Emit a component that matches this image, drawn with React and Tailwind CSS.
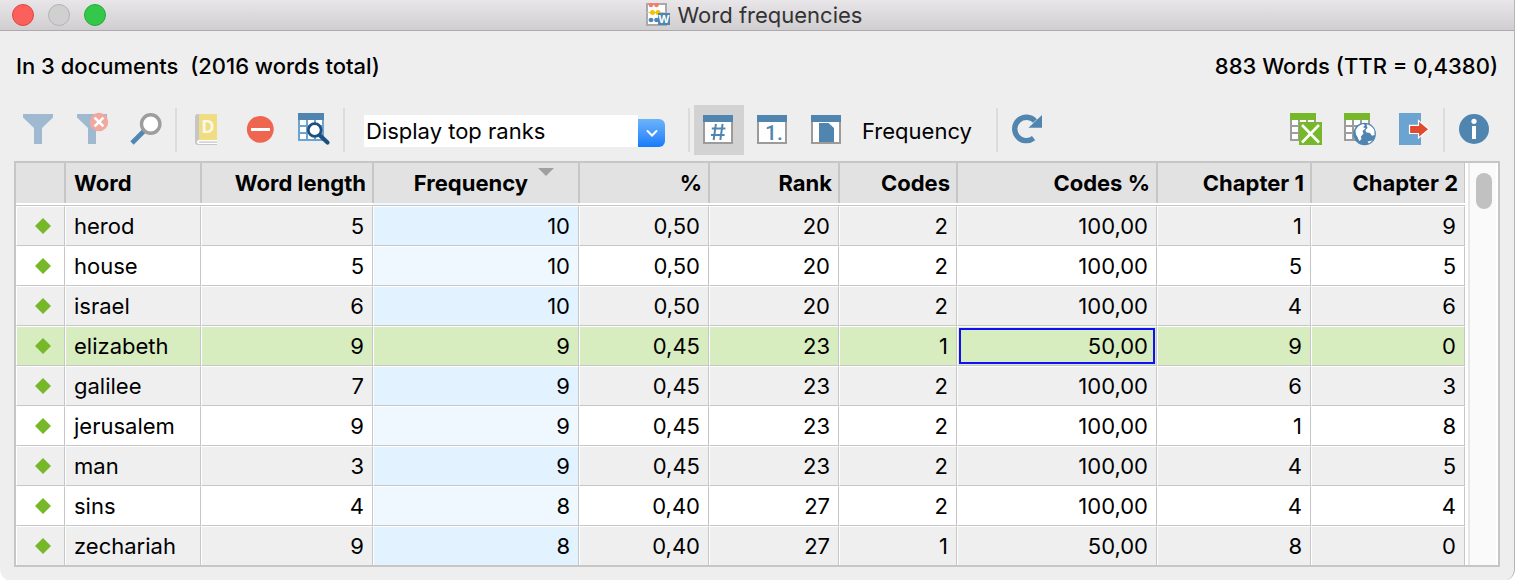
import React, { useState } from "react";
import cl from "clsx";

const columns = [
  { title: "", width: "w-[49px]" },
  { title: "Word", width: "w-[136px]" },
  { title: "Word length", width: "w-[172px]" },
  { title: "Frequency", width: "w-[206px]", sorted: true },
  { title: "%", width: "w-[130px]" },
  { title: "Rank", width: "w-[130px]" },
  { title: "Codes", width: "w-[118px]" },
  { title: "Codes %", width: "w-[200px]" },
  { title: "Chapter 1", width: "w-[154px]" },
  { title: "Chapter 2", width: "w-[154px]" },
];

const rows = [
  ["herod", "5", "10", "0,50", "20", "2", "100,00", "1", "9"],
  ["house", "5", "10", "0,50", "20", "2", "100,00", "5", "5"],
  ["israel", "6", "10", "0,50", "20", "2", "100,00", "4", "6"],
  ["elizabeth", "9", "9", "0,45", "23", "1", "50,00", "9", "0"],
  ["galilee", "7", "9", "0,45", "23", "2", "100,00", "6", "3"],
  ["jerusalem", "9", "9", "0,45", "23", "2", "100,00", "1", "8"],
  ["man", "3", "9", "0,45", "23", "2", "100,00", "4", "5"],
  ["sins", "4", "8", "0,40", "27", "2", "100,00", "4", "4"],
  ["zechariah", "9", "8", "0,40", "27", "1", "50,00", "8", "0"],
];

const FREQUENCY = 2;
const CODES_PERCENT = 6;

const Icon = ({ children }) => (
  <svg
    className="h-8 w-8 shrink-0 overflow-visible"
    viewBox="0 0 32 32"
    fill="none"
    aria-hidden="true"
  >
    {children}
  </svg>
);

const FilterIcon = () => (
  <Icon>
    <path d="M1 0H31V3.500L20 14V30H12V14L1 3.500Z" fill="#9fb9d0" />
  </Icon>
);

const FilterOffIcon = () => (
  <Icon>
    <path d="M1 0H31V3.500L20 14V30H12V14L1 3.500Z" fill="#9fb9d0" />
    <circle cx="23" cy="8" r="9.200" fill="#f1a89d" />
    <path d="M18.600 3.600L27.400 12.400M27.400 3.600L18.600 12.400" stroke="#fff" strokeWidth="2.600" />
  </Icon>
);

const SearchIcon = () => (
  <Icon>
    <path d="M2 29L14 17" stroke="#4f86b4" strokeWidth="4.600" />
    <circle cx="20.700" cy="10" r="9.200" fill="#fff" stroke="#9d9d9d" strokeWidth="3.400" />
  </Icon>
);

const DictionaryIcon = () => (
  <Icon>
    <path d="M8 0H27V31H8A3 3 0 0 1 5 28V3A3 3 0 0 1 8 0Z" fill="#c6c6c6" />
    <path d="M9 0H27V26H9Z" fill="#f0dc82" />
    <path d="M27 26H9Q7 26 7 28T9 30H27Z" fill="#fff" />
    <path d="M9 27.200H27V29H9Z" fill="#d6d6d6" />
    <text
      x="18"
      y="19"
      textAnchor="middle"
      fontSize="18"
      fontWeight="700"
      fill="#fbf8e6"
      fontFamily="'Open Sans', sans-serif"
    >
      D
    </text>
  </Icon>
);

const StopIcon = () => (
  <Icon>
    <circle cx="16.300" cy="15.300" r="13.400" fill="#ef6650" />
    <path d="M7 14H26V17H7Z" fill="#fff" />
  </Icon>
);

const TableSearchIcon = () => (
  <Icon>
    <path d="M0 -1H26V27H0Z" fill="#6ba3d1" />
    <path d="M0 -1H26V6H0Z" fill="#5085b0" />
    <path
      d="M2 6H8V11H2ZM10 6H16V11H10ZM18 6H24V11H18ZM2 13H8V18H2ZM10 13H16V18H10ZM18 13H24V18H18ZM2 20H8V25H2ZM10 20H16V25H10ZM18 20H24V25H18Z"
      fill="#fff"
    />
    <path d="M21.500 21L29.500 28.500" stroke="#1d5080" strokeWidth="4.200" strokeLinecap="round" />
    <circle cx="16.700" cy="16" r="6.400" fill="#fff" stroke="#1d5080" strokeWidth="2.700" />
  </Icon>
);

const Frame = ({ children }) => (
  <Icon>
    <path d="M1 2H29V29H1Z" fill="#fff" stroke="#9b9b9b" strokeWidth="2" />
    <path d="M0 1H30V8H0Z" fill="#5085b0" />
    {children}
  </Icon>
);

const CountIcon = () => (
  <Frame>
    <path
      d="M12.900 9.800L10.600 26M19.600 9.800L17.300 26M8.800 14.400H22.400M8 20.900H21.600"
      stroke="#5085b0"
      strokeWidth="2"
    />
  </Frame>
);

const RankIcon = () => (
  <Frame>
    <text x="8" y="26" fontSize="21" fontWeight="500" fill="#5085b0" fontFamily="Roboto, sans-serif">
      1.
    </text>
  </Frame>
);

const DocumentIcon = () => (
  <Frame>
    <path d="M8 9H17.500L23 14V28H8Z" fill="#5085b0" />
  </Frame>
);

const RefreshIcon = () => (
  <Icon>
    <path d="M24 7A11.700 11.700 0 1 0 22.600 24.200" stroke="#5085b0" strokeWidth="5.400" />
    <path d="M31 1V13.700H17.500Z" fill="#5085b0" />
  </Icon>
);

const GreenTable = () => (
  <>
    <path d="M0 -1H26V27H0Z" fill="#9d9d9d" />
    <path d="M0 -1H26V6H0Z" fill="#76b82a" />
    <path
      d="M2 6H8V11H2ZM10 6H16V11H10ZM18 6H24V11H18ZM2 13H8V18H2ZM10 13H16V18H10ZM18 13H24V18H18ZM2 20H8V25H2ZM10 20H16V25H10Z"
      fill="#fff"
    />
  </>
);

const ExcelIcon = () => (
  <Icon>
    <GreenTable />
    <path d="M9 8H32V31H9Z" fill="#76b82a" />
    <path d="M12 11L29 28.500M29 11L12 28.500" stroke="#fff" strokeWidth="2.600" />
  </Icon>
);

const WebIcon = () => (
  <Icon>
    <GreenTable />
    <circle cx="20.600" cy="20" r="11.300" fill="#5085b0" />
    <path
      d="M11.500 16.500C13 12.500 16 10.300 19.500 9.900L21 11.500L19 13L21.500 14.500L18.500 17L19.500 19.500L16.800 22.800L17.500 25L15.500 27C14 25 13.800 22.500 12 20.800Z"
      fill="#fff"
    />
    <path
      d="M22.500 10.200C26 10.700 28.800 12.800 30.300 16.200L30.600 21L28 21.800L26 19L22 18.200L21.500 16L23.500 14Z"
      fill="#fff"
    />
    <path d="M23.500 27.500L28.500 26.500L25 29.500Z" fill="#fff" />
  </Icon>
);

const ExportIcon = () => (
  <Icon>
    <path d="M1 -1H23V31H1Z" fill="#6ba3d1" />
    <path
      d="M11.500 11.300H20.500V6.500L31 15.300L20.500 24V19.500H11.500Z"
      fill="#e04a30"
      stroke="#fff"
      strokeWidth="1.200"
    />
  </Icon>
);

const InfoIcon = () => (
  <Icon>
    <circle cx="16" cy="15" r="15" fill="#5085b0" />
    <circle cx="16" cy="7.300" r="2.600" fill="#fff" />
    <path d="M14 12H18V25H14Z" fill="#fff" />
  </Icon>
);

const AppIcon = () => (
  <svg className="h-6 w-6" viewBox="0 0 24 24" fill="none" aria-hidden="true">
    <path d="M1 1H20V22H1Z" fill="#fff" stroke="#a9a9a9" strokeWidth="2" />
    <path d="M1 9.500H20M1 17H20" stroke="#c9c9c9" strokeWidth="1" />
    <g fill="#fa7a68">
      <circle cx="5" cy="2" r="2.300" />
      <circle cx="10.500" cy="2" r="2.300" />
    </g>
    <g fill="#f3c300">
      <circle cx="6.500" cy="9.500" r="2.500" />
      <circle cx="12" cy="9.500" r="2.500" />
    </g>
    <g fill="#5085b0">
      <circle cx="5" cy="17" r="2.300" />
      <circle cx="10.500" cy="17" r="2.300" />
      <path d="M12 10H24V22H12Z" />
    </g>
    <text
      x="18"
      y="20"
      textAnchor="middle"
      fontSize="11"
      fontWeight="700"
      fill="#fff"
      fontFamily="Inter, sans-serif"
    >
      W
    </text>
  </svg>
);

const ToolButton = ({ label, active, onClick, children }) => (
  <button
    type="button"
    aria-label={label}
    aria-pressed={active}
    onClick={onClick}
    className={cl("flex h-[50px] w-[50px] shrink-0 items-center justify-center", active && "bg-[#d2d2d2]")}
  >
    {children}
  </button>
);

const Separator = () => <div className="h-11 w-0.5 shrink-0 bg-[#dcdcdc]" />;

const TitleBar = () => (
  <header className="grid h-[31px] grid-cols-[1fr_auto_1fr] items-center border-b border-[#acaaac] bg-linear-to-b from-[#e8e6e8] to-[#d0ced0] pr-[18px] pl-3">
    <div className="flex gap-[14px]">
      <button type="button" aria-label="Close" className="h-[22px] w-[22px] rounded-full border border-[#e0443e] bg-[#fc605c]" />
      <button type="button" aria-label="Minimize" className="h-[22px] w-[22px] rounded-full border border-[#b4b4b4] bg-[#d0d0d0]" />
      <button type="button" aria-label="Zoom" className="h-[22px] w-[22px] rounded-full border border-[#27aa35] bg-[#34c84a]" />
    </div>
    <div className="flex items-center gap-2">
      <AppIcon />
      <h1 className="text-[22px] leading-7 text-[#333]">Word frequencies</h1>
    </div>
  </header>
);

const Toolbar = () => {
  const [view, setView] = useState("count");
  return (
    <div className="flex items-center justify-between pr-[15px] pl-[13px]">
      <div className="flex items-center gap-1">
        <ToolButton label="Filter"><FilterIcon /></ToolButton>
        <ToolButton label="Reset filter"><FilterOffIcon /></ToolButton>
        <ToolButton label="Search"><SearchIcon /></ToolButton>
        <Separator />
        <ToolButton label="Dictionary"><DictionaryIcon /></ToolButton>
        <ToolButton label="Stop list"><StopIcon /></ToolButton>
        <ToolButton label="Find in table"><TableSearchIcon /></ToolButton>
        <Separator />
        <div className="flex items-end pt-0.5 pr-[19px] pl-[15px]">
          <select
            aria-label="Display"
            className="h-8 w-[274px] appearance-none rounded-none bg-white px-0.5 text-[22px] leading-8 text-black outline-none"
          >
            <option>Display top ranks</option>
          </select>
          <span className="pointer-events-none flex h-7 w-[27px] items-center justify-center rounded-r-md bg-linear-to-b from-[#6cb3fa] to-[#147bfc]">
            <svg className="h-3 w-3" viewBox="0 0 12 12" fill="none" aria-hidden="true">
              <path d="M1.500 4L6 8.500L10.500 4" stroke="#fff" strokeWidth="2" strokeLinecap="round" />
            </svg>
          </span>
        </div>
        <Separator />
        <ToolButton label="Show count" active={view === "count"} onClick={() => setView("count")}>
          <CountIcon />
        </ToolButton>
        <ToolButton label="Show rank" active={view === "rank"} onClick={() => setView("rank")}>
          <RankIcon />
        </ToolButton>
        <ToolButton label="Show documents" active={view === "documents"} onClick={() => setView("documents")}>
          <DocumentIcon />
        </ToolButton>
        <span className="pt-0.5 pr-5 pl-1.5 text-[22px] leading-8">Frequency</span>
        <Separator />
        <ToolButton label="Refresh"><RefreshIcon /></ToolButton>
      </div>
      <div className="flex items-center gap-1">
        <ToolButton label="Open as Excel table"><ExcelIcon /></ToolButton>
        <ToolButton label="Open as web page"><WebIcon /></ToolButton>
        <ToolButton label="Export"><ExportIcon /></ToolButton>
        <Separator />
        <ToolButton label="Info"><InfoIcon /></ToolButton>
      </div>
    </div>
  );
};

const HeaderCell = ({ column, index }) => (
  <th
    scope="col"
    className={cl(
      "border-b border-[#c6c6c6] p-0 pb-0.5 font-bold",
      column.width,
      column.sorted ? "bg-[#f0f8ff]" : "bg-white"
    )}
  >
    <div
      className={cl(
        "relative h-10 border-r border-[#c6c6c6] bg-[#e2e2e2] leading-10",
        index > 0 && "border-l",
        index === 1 ? "pl-2 text-left" : "text-right",
        column.sorted ? "pr-[50px]" : "pr-1.5"
      )}
    >
      {column.title}
      {column.sorted && (
        <svg className="absolute top-[5px] right-6 h-2 w-4" viewBox="0 0 16 8" aria-hidden="true">
          <path d="M0 0H16L8 8Z" fill="#a0a0a0" />
        </svg>
      )}
    </div>
  </th>
);

const cellColor = (row, index, selected) => {
  if (selected) return "bg-[#d7ecbf]";
  if (index === FREQUENCY) return row % 2 ? "bg-[#f0f8ff]" : "bg-[#e2f2ff]";
  return row % 2 ? "bg-white" : "bg-[#efefef]";
};

const cell =
  "border-t border-r border-b border-l border-t-white border-l-white border-r-[#c6c6c6] border-b-[#c6c6c6] p-0 group-last:border-b-0";

const WordTable = () => {
  const [selected, setSelected] = useState(3);
  return (
    <div className="mr-[14px] ml-[14px] flex border-2 border-[#c6c6c6] bg-white">
      <table className="min-w-0 flex-1 table-fixed border-separate border-spacing-0 text-[22px]">
        <thead>
          <tr>
            {columns.map((column, i) => (
              <HeaderCell key={i} column={column} index={i} />
            ))}
          </tr>
        </thead>
        <tbody>
          {rows.map((values, row) => (
            <tr key={values[0]} className="group h-10 last:h-[39px]" onClick={() => setSelected(row)}>
              <td className={cl(cell, cellColor(row, -1, row === selected))}>
                <svg className="ml-[18px] h-4 w-4" viewBox="0 0 16 16" aria-hidden="true">
                  <path d="M8 0L16 8L8 16L0 8Z" fill="#76b82a" />
                </svg>
              </td>
              {values.map((value, i) => (
                <td
                  key={i}
                  className={cl(cell, i > 0 && "text-right", cellColor(row, i, row === selected))}
                >
                  <div
                    className={cl(
                      "leading-8",
                      row === selected && i === CODES_PERCENT
                        ? "mx-px border-2 border-[#0f0fff] px-[5px]"
                        : "px-2 py-[3px]"
                    )}
                  >
                    {value}
                  </div>
                </td>
              ))}
            </tr>
          ))}
        </tbody>
      </table>
      <div className="ml-[3px] w-[30px] shrink-0 border-x-2 border-l-[#e6e6e6] border-r-white bg-[#fafafa] px-1.5 pt-2.5">
        <div className="h-9 w-4 rounded-full bg-[#c1c1c1]" />
      </div>
    </div>
  );
};

const App = () => {
  return (
    <main className="overflow-hidden rounded-b-xl border-r border-[#b4b4b4] bg-[#eee] pb-[14px] font-['Inter',sans-serif] text-black">
      <TitleBar />
      <div className="flex justify-between px-4 pt-[19px] pb-[23px] text-[22px] leading-8 font-medium">
        <p className="whitespace-pre">In 3 documents  (2016 words total)</p>
        <p>883 Words (TTR = 0,4380)</p>
      </div>
      <Toolbar />
      <div className="pt-1.5">
        <WordTable />
      </div>
    </main>
  );
};

export default App;
